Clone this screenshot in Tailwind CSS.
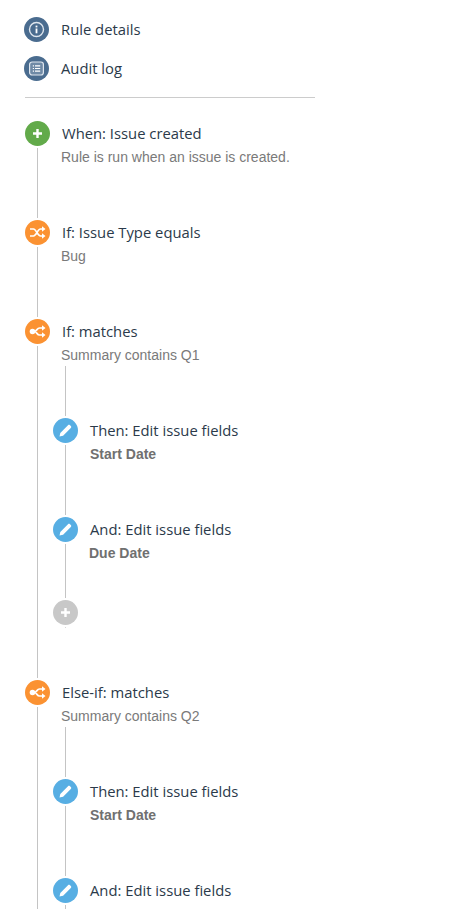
<!DOCTYPE html>
<html>
<head>
<meta charset="utf-8">
<script src="https://cdn.jsdelivr.net/npm/@tailwindcss/browser@4"></script>
</head>
<body class="bg-white overflow-hidden h-[909px] font-['Open_Sans',sans-serif]">
<div class="w-[290px] ml-[24px] pt-[17px]">
  <div class="flex items-center gap-[12px] h-[25px] mb-[14px]">
    <span class="w-[25px] h-[25px] rounded-full bg-[#4a6c8f] flex items-center justify-center shrink-0">
      <svg width="17" height="17" viewBox="0 0 17 17" fill="none"><circle cx="8.500" cy="8.500" r="7" stroke="#dfe6ee" stroke-width="1.400"/><rect x="7.600" y="7.500" width="1.800" height="4.800" fill="#fff"/><rect x="7.600" y="4.600" width="1.800" height="1.800" fill="#fff"/></svg>
    </span>
    <span class="text-[14.8px] leading-[25px] text-[#2b3a4a]">Rule details</span>
  </div>
  <div class="flex items-center gap-[12px] h-[25px]">
    <span class="w-[25px] h-[25px] rounded-full bg-[#4a6c8f] flex items-center justify-center shrink-0">
      <svg width="17" height="17" viewBox="0 0 17 17" fill="none"><rect x="1.600" y="2" width="13.800" height="13" rx="2.500" fill="#6f8aa6" stroke="#dfe6ee" stroke-width="1.200"/><path d="M4.800 5.800h1.200M7 5.800h5.200M4.800 8.500h1.200M7 8.500h5.200M4.800 11.200h1.200M7 11.200h5.200" stroke="#fff" stroke-width="1.200"/></svg>
    </span>
    <span class="text-[14.8px] leading-[25px] text-[#2b3a4a]">Audit log</span>
  </div>
</div>
<div class="w-[290px] ml-[25px] mt-[16px] mb-[23px] h-px bg-[#cccccc]"></div>

<div class="pl-[25px] flex flex-col">
  <!-- When -->
  <div class="flex h-[99px]">
    <div class="w-[25px] flex flex-col items-center shrink-0">
      <span class="w-[25px] h-[25px] rounded-full bg-[#62aa4a] flex items-center justify-center"><svg width="11" height="11" viewBox="0 0 11 11"><path d="M5.500 1v9M1 5.500h9" stroke="#fff" stroke-width="2.400"/></svg></span>
      <span class="w-px flex-1 mt-[2px] mb-[2px] bg-[#c4c4c4]"></span>
    </div>
    <div class="pl-[12px]">
      <div class="text-[14.8px] leading-[25px] text-[#2b3a4a]">When: Issue created</div>
      <div class="text-[14px] leading-[22px] -ml-px font-['Liberation_Sans',sans-serif] text-[#7a7a7a]">Rule is run when an issue is created.</div>
    </div>
  </div>
  <!-- If issue type -->
  <div class="flex h-[99px]">
    <div class="w-[25px] flex flex-col items-center shrink-0">
      <span class="w-[25px] h-[25px] rounded-full bg-[#fb9232] flex items-center justify-center"><svg width="17" height="13" viewBox="0 0 17 13" fill="none" stroke="#fff" stroke-width="1.700"><path d="M1 3h3.500c2.800 0 4 7 7 7H14M1 10h3.500c2.800 0 4-7 7-7H14"/><path d="M13 0.300l3.500 2.700-3.500 2.700zM13 7.300l3.500 2.700-3.500 2.700z" fill="#fff" stroke="none"/></svg></span>
      <span class="w-px flex-1 mt-[2px] mb-[2px] bg-[#c4c4c4]"></span>
    </div>
    <div class="pl-[12px]">
      <div class="text-[14.8px] leading-[25px] text-[#2b3a4a]">If: Issue Type equals</div>
      <div class="text-[14px] leading-[22px] -ml-px font-['Liberation_Sans',sans-serif] text-[#7a7a7a]">Bug</div>
    </div>
  </div>
  <!-- If matches -->
  <div class="flex h-[361px]">
    <div class="w-[25px] flex flex-col items-center shrink-0">
      <span class="w-[25px] h-[25px] rounded-full bg-[#fb9232] flex items-center justify-center"><svg width="17" height="13" viewBox="0 0 17 13" fill="none" stroke="#fff" stroke-width="1.700"><path d="M4 6.500h1.500c2 0 2.500-3.500 5-3.500H14M5.500 6.500c2 0 2.500 3.500 5 3.500H14"/><circle cx="3.500" cy="6.500" r="2.800" fill="#fff" stroke="none"/><path d="M13 .3l3.500 2.700L13 5.700zM13 7.300l3.500 2.700L13 12.700z" fill="#fff" stroke="none"/></svg></span>
      <span class="w-px flex-1 mt-[2px] mb-[2px] bg-[#c4c4c4]"></span>
    </div>
    <div class="pl-[12px]">
      <div class="text-[14.8px] leading-[25px] text-[#2b3a4a]">If: matches</div>
      <div class="text-[14px] leading-[22px] -ml-px font-['Liberation_Sans',sans-serif] text-[#7a7a7a]">Summary contains Q1</div>
      <div class="-ml-[9px]">
        <div class="w-[25px] flex justify-center"><span class="w-px h-[50px] mb-[2px] bg-[#c4c4c4]"></span></div>
        <div class="flex h-[99px]">
          <div class="w-[25px] flex flex-col items-center shrink-0">
            <span class="w-[25px] h-[25px] rounded-full bg-[#57aee3] flex items-center justify-center"><svg width="15" height="15" viewBox="0 0 15 15"><path d="M1.500 13.500l.800-3.600L10 2.200c.600-.600 1.400-.600 2 0l.800.800c.600.600.600 1.400 0 2L5.100 12.700z" fill="#fff"/></svg></span>
            <span class="w-px flex-1 mt-[2px] mb-[2px] bg-[#c4c4c4]"></span>
          </div>
          <div class="pl-[12px]">
            <div class="text-[14.8px] leading-[25px] text-[#2b3a4a]">Then: Edit issue fields</div>
            <div class="text-[14px] leading-[22px] font-bold font-['Liberation_Sans',sans-serif] text-[#707070]">Start Date</div>
          </div>
        </div>
        <div class="flex h-[83px]">
          <div class="w-[25px] flex flex-col items-center shrink-0">
            <span class="w-[25px] h-[25px] rounded-full bg-[#57aee3] flex items-center justify-center"><svg width="15" height="15" viewBox="0 0 15 15"><path d="M1.500 13.500l.800-3.600L10 2.200c.600-.600 1.400-.600 2 0l.800.800c.600.600.600 1.400 0 2L5.100 12.700z" fill="#fff"/></svg></span>
            <span class="w-px flex-1 mt-[2px] mb-[2px] bg-[#c4c4c4]"></span>
          </div>
          <div class="pl-[12px]">
            <div class="text-[14.8px] leading-[25px] text-[#2b3a4a]">And: Edit issue fields</div>
            <div class="text-[14px] leading-[22px] -ml-px font-bold font-['Liberation_Sans',sans-serif] text-[#707070]">Due Date</div>
          </div>
        </div>
        <div class="w-[25px] flex flex-col items-center">
          <div class="w-[25px] h-[25px] rounded-full bg-[#c8c8c8] flex items-center justify-center"><svg width="11" height="11" viewBox="0 0 11 11"><path d="M5.500 1v9M1 5.500h9" stroke="#fff" stroke-width="2.400"/></svg></div>
          <span class="w-px h-px mt-[2px] bg-[#d8d8d8]"></span>
        </div>
      </div>
    </div>
  </div>
  <!-- Else-if -->
  <div class="flex h-[240px]">
    <div class="w-[25px] flex flex-col items-center shrink-0">
      <span class="w-[25px] h-[25px] rounded-full bg-[#fb9232] flex items-center justify-center"><svg width="17" height="13" viewBox="0 0 17 13" fill="none" stroke="#fff" stroke-width="1.700"><path d="M4 6.500h1.500c2 0 2.500-3.500 5-3.500H14M5.500 6.500c2 0 2.500 3.500 5 3.500H14"/><circle cx="3.500" cy="6.500" r="2.800" fill="#fff" stroke="none"/><path d="M13 .3l3.500 2.700L13 5.700zM13 7.300l3.500 2.700L13 12.700z" fill="#fff" stroke="none"/></svg></span>
      <span class="w-px flex-1 mt-[2px] bg-[#c4c4c4]"></span>
    </div>
    <div class="pl-[12px]">
      <div class="text-[14.8px] leading-[25px] text-[#2b3a4a]">Else-if: matches</div>
      <div class="text-[14px] leading-[22px] -ml-px font-['Liberation_Sans',sans-serif] text-[#7a7a7a]">Summary contains Q2</div>
      <div class="-ml-[9px]">
        <div class="w-[25px] flex justify-center"><span class="w-px h-[50px] mb-[2px] bg-[#c4c4c4]"></span></div>
        <div class="flex h-[99px]">
          <div class="w-[25px] flex flex-col items-center shrink-0">
            <span class="w-[25px] h-[25px] rounded-full bg-[#57aee3] flex items-center justify-center"><svg width="15" height="15" viewBox="0 0 15 15"><path d="M1.500 13.500l.800-3.600L10 2.200c.600-.600 1.400-.600 2 0l.800.800c.600.600.600 1.400 0 2L5.100 12.700z" fill="#fff"/></svg></span>
            <span class="w-px flex-1 mt-[2px] mb-[2px] bg-[#c4c4c4]"></span>
          </div>
          <div class="pl-[12px]">
            <div class="text-[14.8px] leading-[25px] text-[#2b3a4a]">Then: Edit issue fields</div>
            <div class="text-[14px] leading-[22px] font-bold font-['Liberation_Sans',sans-serif] text-[#707070]">Start Date</div>
          </div>
        </div>
        <div class="flex h-[40px]">
          <div class="w-[25px] flex flex-col items-center shrink-0">
            <span class="w-[25px] h-[25px] rounded-full bg-[#57aee3] flex items-center justify-center"><svg width="15" height="15" viewBox="0 0 15 15"><path d="M1.500 13.500l.800-3.600L10 2.200c.600-.600 1.400-.600 2 0l.800.800c.600.600.600 1.400 0 2L5.100 12.700z" fill="#fff"/></svg></span>
            <span class="w-px flex-1 mt-[2px] bg-[#c4c4c4]"></span>
          </div>
          <div class="pl-[12px]">
            <div class="text-[14.8px] leading-[25px] text-[#2b3a4a]">And: Edit issue fields</div>
          </div>
        </div>
      </div>
    </div>
  </div>
</div>
</body>
</html>
